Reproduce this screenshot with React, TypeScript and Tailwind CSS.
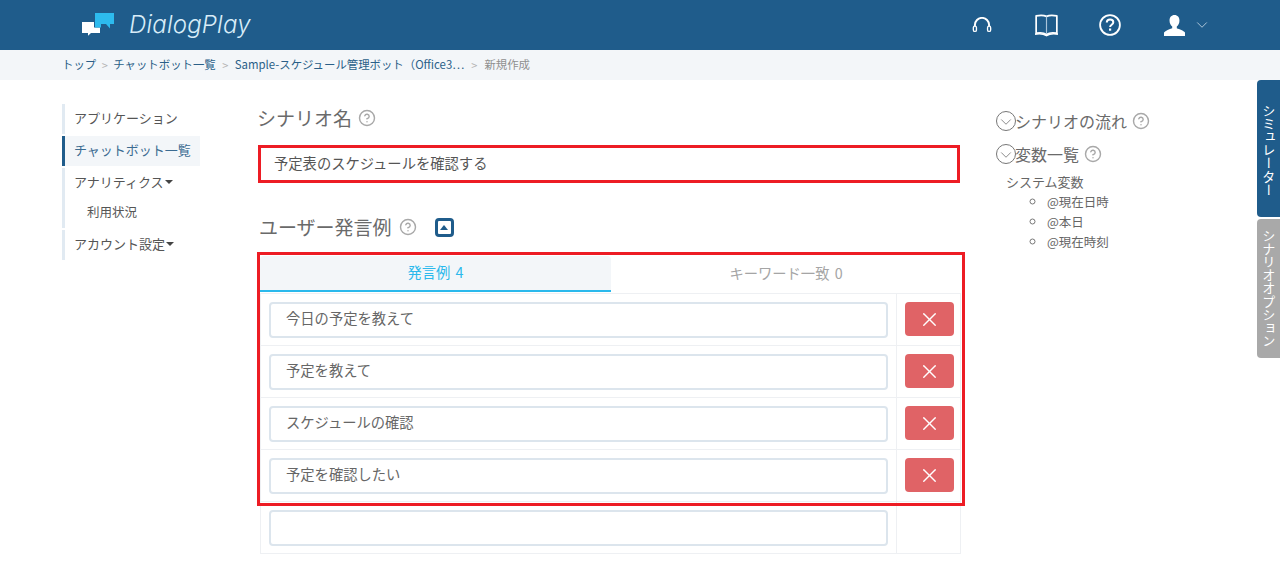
import React from "react";
import { CircleHelp, X, ChevronDown } from "lucide-react";

const font = "font-['Noto_Sans_CJK_JP','Noto_Sans',sans-serif]";

function Help({ size = 18 }: { size?: number }) {
  return <CircleHelp size={size} strokeWidth={1.9} className="text-[#a8a8a8] shrink-0" />;
}

function Logo() {
  return (
    <svg width="33" height="25" viewBox="0 0 33 25" className="shrink-0">
      <path d="M0 9h12v5.500h6V20H9l-3 2.800V20H0z" fill="#fff" />
      <path d="M13 0h19v11h-4v4.500L24 11h-5v3.500h-6z" fill="#2dbbee" />
    </svg>
  );
}

function Headphones() {
  return (
    <svg width="20" height="16" viewBox="0 0 22 18" fill="none">
      <path d="M3 11V9a8 8 0 0 1 16 0v2" stroke="#fff" strokeWidth="2.200" />
      <rect x="0.500" y="9.500" width="5" height="7.500" rx="2.500" fill="#fff" />
      <rect x="16.500" y="9.500" width="5" height="7.500" rx="2.500" fill="#fff" />
      <rect x="2" y="11" width="2" height="4.500" rx="1" fill="#1f5c8b" />
      <rect x="18" y="11" width="2" height="4.500" rx="1" fill="#1f5c8b" />
    </svg>
  );
}

function Book() {
  return (
    <svg width="23" height="23" viewBox="0 0 24 23" fill="none">
      <path d="M1.200 1.500C5 .6 9.500.8 12 2c2.500-1.200 7-1.400 10.800-.5v18c-3.800-.7-8.300-.4-10.800 1.300-2.500-1.700-7-2-10.800-1.300z" stroke="#fff" strokeWidth="1.800" strokeLinejoin="round" />
      <path d="M12 2v18" stroke="#a9c4da" strokeWidth="1.200" />
      <path d="M0 20.500c4-.7 9-.4 12 1.500 3-1.900 8-2.200 12-1.500" stroke="#fff" strokeWidth="1.600" />
    </svg>
  );
}

function HelpHeader() {
  return (
    <svg width="22" height="22" viewBox="0 0 22 22" fill="none">
      <circle cx="11" cy="11" r="9.900" stroke="#fff" strokeWidth="1.800" />
      <path d="M7.800 8.600c0-1.900 1.400-3 3.300-3s3.200 1.100 3.200 2.700c0 2.500-3.200 2.400-3.200 4.700" stroke="#fff" strokeWidth="2" />
      <rect x="10" y="14.500" width="2.200" height="2.200" fill="#fff" />
    </svg>
  );
}

function User() {
  return (
    <svg width="21" height="21" viewBox="0 0 22 22">
      <path d="M11 0c3.200 0 5.200 2.400 5.200 5.800 0 2.800-1.200 5.200-2.800 6.300v1.700c2.800 1.200 7.100 2.200 8.600 4.600V22H0v-3.600c1.500-2.400 5.800-3.400 8.600-4.600v-1.700C7 11 5.800 8.600 5.800 5.800 5.800 2.400 7.800 0 11 0z" fill="#fff" />
    </svg>
  );
}

function CircleChevron() {
  return (
    <span className="w-[20px] h-[20px] mr-[-1px] rounded-full border border-[#777] flex items-center justify-center shrink-0">
      <ChevronDown size={18} strokeWidth={1} className="text-[#666] mt-[2px]" />
    </span>
  );
}

function Crumb({ children, muted }: { children: React.ReactNode; muted?: boolean }) {
  return <span className={muted ? "text-[#8f8f8f]" : "text-[#2a5f88]"}>{children}</span>;
}

function Sep({ className }: { className: string }) {
  return <span className={"text-[#b4b4b4] text-[11px] " + className}>&gt;</span>;
}

function SideItem({ children, active }: { children: React.ReactNode; active?: boolean }) {
  return (
    <div
      className={
        "h-[30px] flex items-center pl-[9px] pb-[2px] border-l-[3px] " +
        (active ? "border-[#1f5c8b] bg-[#f3f6f9] text-[#3b6b91]" : "border-[#e1eaf2] text-[#555]")
      }
    >
      {children}
    </div>
  );
}

function Caret() {
  return <span className="inline-block ml-[1px] w-0 h-0 border-x-[4px] border-x-transparent border-t-[4px] border-t-[#444]" />;
}

function Row({ value, del = true }: { value: string; del?: boolean }) {
  return (
    <div className="flex h-[52px] border-x border-b border-[#eef0f3]">
      <div className="w-[636px] border-r border-[#eef0f3] px-[8px] pt-[8px]">
        <input
          readOnly
          value={value}
          className="w-full h-[36px] border-2 border-[#dce5ed] rounded-[4px] pl-[15px] pb-[5px] text-[14.300px] text-[#666] outline-none bg-white"
        />
      </div>
      <div className="flex-1 pl-[8px] pt-[8px]">
        {del && (
          <button className="w-[49px] h-[34px] rounded-[4px] bg-[#e06366] flex items-center justify-center">
            <X size={23} strokeWidth={1.400} className="text-white" />
          </button>
        )}
      </div>
    </div>
  );
}

export default function App() {
  return (
    <div className={`relative h-[570px] overflow-hidden bg-white text-[#555] ${font}`}>
      <header className="h-[50px] bg-[#1f5c8b] flex items-center">
        <div className="ml-[82px]">
          <Logo />
        </div>
        <span className="ml-[14px] w-[122px] font-['Inter',sans-serif] font-light italic text-[24px] tracking-[0.2px] text-[#d8ecf8] whitespace-nowrap">
          DialogPlay
        </span>
        <div className="ml-[721px] flex items-center">
          <Headphones />
          <span className="ml-[43px]"><Book /></span>
          <span className="ml-[41px]"><HelpHeader /></span>
          <span className="ml-[43px]"><User /></span>
          <ChevronDown size={18} strokeWidth={1} className="ml-[8px] text-[#d8e6f0]" />
        </div>
      </header>

      <nav className="h-[30px] bg-[#f3f6f9] flex items-center pl-[62px] text-[11.400px]">
        <Crumb>トップ</Crumb>
        <Sep className="mx-[5.500px]" />
        <Crumb>チャットボット一覧</Crumb>
        <Sep className="mx-[6.500px]" />
        <Crumb>Sample-スケジュール管理ボット（Office3⋯</Crumb>
        <Sep className="mx-[7px]" />
        <Crumb muted>新規作成</Crumb>
      </nav>

      <main className="flex pt-[24px]">
        <aside className="ml-[62px] w-[138px] flex flex-col gap-[2px] text-[13px] shrink-0">
          <SideItem>アプリケーション</SideItem>
          <SideItem active>チャットボット一覧</SideItem>
          <div className="border-l-[3px] border-[#e1eaf2] text-[#555]">
            <div className="h-[30px] flex items-center pl-[9px] pb-[2px]">アナリティクス<Caret /></div>
            <div className="h-[30px] flex items-center pl-[22px] pb-[2px] text-[12.500px]">利用状況</div>
          </div>
          <SideItem>アカウント設定<Caret /></SideItem>
        </aside>

        <section className="ml-[58px] w-[703px] shrink-0">
          <div className="-ml-[1px] h-[28px] flex items-center gap-[6px] text-[19px] text-[#6a6a6a]">
            シナリオ名
            <Help />
          </div>
          <div className="mt-[13px] mr-[1px] h-[38px] border-[3px] border-[#ed1c24] flex items-center pl-[13px] pb-[2px] text-[14.300px] text-[#555]">
            予定表のスケジュールを確認する
          </div>

          <div className="mt-[30px] ml-[1px] h-[28px] flex items-center text-[19px] text-[#6a6a6a]">
            ユーザー発言例
            <span className="ml-[7px]"><Help /></span>
            <span className="ml-[18px] w-[19px] h-[19px] rounded-[4px] border-[3px] border-[#1f5c8b] bg-white flex items-center justify-center">
              <span className="w-0 h-0 border-x-[4px] border-x-transparent border-b-[5px] border-b-[#1f5c8b]" />
            </span>
          </div>

          <div className="relative mt-[15px] ml-[2px]">
            <div className="flex h-[36px] text-[14.300px]">
              <div className="w-[351px] bg-[#f3f6f9] rounded-t-[4px] border-b-2 border-[#2bb9ec] text-[#2bb9ec] flex items-center justify-center pb-[3px] [word-spacing:2px]">
                発言例 4
              </div>
              <div className="flex-1 text-[#a5a5a5] flex items-center justify-center pb-[2px] [word-spacing:2px]">キーワード一致 0</div>
            </div>
            <div className="mt-[1px] border-t border-[#eef0f3]">
              <Row value="今日の予定を教えて" />
              <Row value="予定を教えて" />
              <Row value="スケジュールの確認" />
              <Row value="予定を確認したい" />
              <Row value="" del={false} />
            </div>
            <div className="absolute left-[-3px] top-[-4px] w-[708px] h-[254px] border-[3px] border-[#ed1c24] pointer-events-none" />
          </div>
        </section>

        <aside className="ml-[35px] flex-1 pt-[7px]">
          <div className="h-[20px] flex items-center text-[16px] text-[#6a6a6a]">
            <CircleChevron />
            シナリオの流れ
            <span className="ml-[5px]"><Help /></span>
          </div>
          <div className="mt-[13px] h-[20px] flex items-center text-[16px] text-[#6a6a6a]">
            <CircleChevron />
            変数一覧
            <span className="ml-[5px]"><Help /></span>
          </div>
          <div className="mt-[8px] ml-[10px] text-[13px] text-[#666]">
            <div className="h-[20px] flex items-center">システム変数</div>
            <ul className="list-[circle] pl-[41px] text-[12.500px] marker:text-[#777]">
              <li className="h-[20px] leading-[20px]">@現在日時</li>
              <li className="h-[20px] leading-[20px]">@本日</li>
              <li className="h-[20px] leading-[20px]">@現在時刻</li>
            </ul>
          </div>
        </aside>
      </main>

      <div className="absolute right-0 top-[80px] flex flex-col gap-[2px] text-[13.200px] text-white">
        <div className="w-[23px] h-[137px] rounded-l-[4px] bg-[#1f5c8b] flex items-center pt-[24px] [writing-mode:vertical-rl]">
          シミュレーター
        </div>
        <div className="w-[23px] h-[139px] rounded-l-[4px] bg-[#a9a9a9] flex items-center pt-[10px] [writing-mode:vertical-rl]">
          シナリオオプション
        </div>
      </div>
    </div>
  );
}
